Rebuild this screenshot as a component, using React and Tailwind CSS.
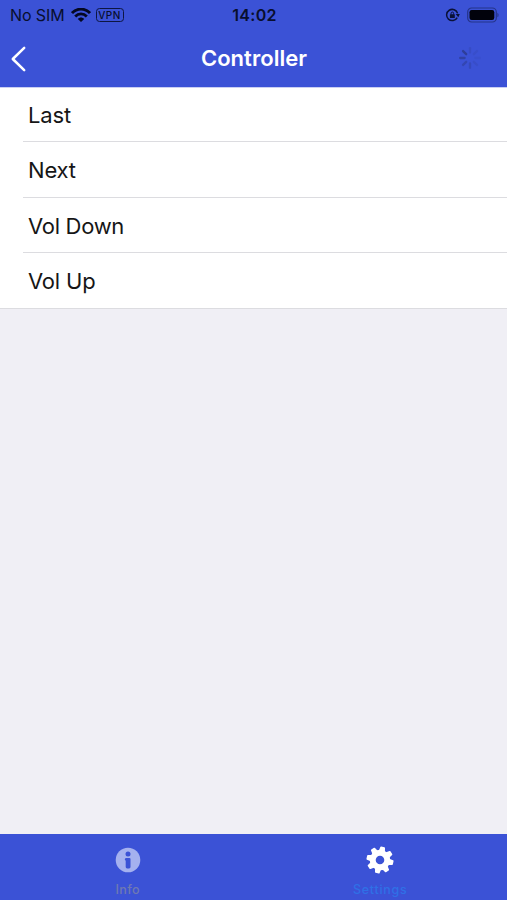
import React from "react";

const rows = [
  { label: "Last", tracking: "tracking-[-0.15px]", height: "h-[54px] pt-px" },
  { label: "Next", tracking: "tracking-[-0.2px]", height: "h-[56px] pt-[2px]" },
  { label: "Vol Down", tracking: "tracking-[-0.3px]", height: "h-[55px] pt-[2px]" },
  { label: "Vol Up", tracking: "tracking-[-0.2px]", height: "h-[55px] pt-[2px]" },
];

const gearTeeth = [12, 57, 102, 147, 192, 237, 282, 327];
const spokes = [0.16, 0.1, 0.08, 0.12, 0.26, 0.34, 0.48, 0.58];

function Wifi() {
  return (
    <svg className="ml-[6px] h-[14px] w-5" viewBox="0 0 20 14" fill="none" stroke="#040822">
      <path d="M1 5.1C6-.2 14-.2 19 5.1" strokeWidth="2.9" />
      <path d="M4.2 8.5C7.5 5.1 12.5 5.1 15.8 8.5" strokeWidth="2.8" />
      <path d="M6.8 11C8.7 9 11.3 9 13.2 11L10 14Z" fill="#040822" stroke="none" />
    </svg>
  );
}

function RotationLock() {
  return (
    <svg className="h-[14px] w-[15px]" viewBox="0 0 15 14" fill="none" stroke="#0a1138">
      <path d="M12.2 9.6A5.6 5.6 0 1 1 12.6 5.4" strokeWidth="1.5" />
      <path d="M10.6 6.1h4.2l-1.5 3.2z" fill="#0a1138" stroke="none" />
      <rect x="4.9" y="6.2" width="4.9" height="3.9" rx=".5" fill="#0a1138" stroke="none" />
      <path d="M6.1 6.6V5.3a1.25 1.25 0 0 1 2.5 0v1.3" strokeWidth="1" />
    </svg>
  );
}

function Battery() {
  return (
    <svg className="-mt-px ml-[7px] h-4 w-8" viewBox="0 0 32 16" fill="none">
      <rect x=".7" y="1" width="28.6" height="14" rx="4" stroke="#253489" strokeWidth="1.2" />
      <rect x="2.5" y="3" width="24.8" height="10" rx="2.2" fill="#01020c" />
      <path d="M30.4 5.7v4.6q1.2-.7 1.2-2.3t-1.2-2.3" fill="#253489" />
    </svg>
  );
}

function Spinner() {
  return (
    <svg className="-mt-px h-6 w-6" viewBox="-12 -12 24 24" stroke="#25306f" strokeWidth="2.3" strokeLinecap="round">
      {spokes.map((opacity, i) => (
        <path key={i} d="M0-5.4V-9.8" opacity={opacity} transform={`rotate(${i * 45})`} />
      ))}
    </svg>
  );
}

function InfoIcon() {
  return (
    <svg className="h-[26px] w-[26px]" viewBox="0 0 26 26">
      <circle cx="13" cy="13" r="12.3" fill="#a5b1ef" />
      <g fill="#3b52d6">
        <circle cx="13" cy="6.9" r="2.5" />
        <path d="M11 10.9h3.4q1.1 0 1.1 1.1v8q0 1.4-1.4 1.4h-2q-1.4 0-1.4-1.4v-6.4q-.9-.2-.9-1.3t1.2-1.4Z" />
      </g>
    </svg>
  );
}

function Gear() {
  return (
    <svg className="h-7 w-7" viewBox="-14 -14 28 28">
      <g fill="#fff" stroke="#fff" strokeLinejoin="round" strokeWidth="1.6">
        {gearTeeth.map((angle) => (
          <path key={angle} d="M-2.4-8.5L-1.6-12.7H1.6L2.4-8.5Z" transform={`rotate(${angle})`} />
        ))}
      </g>
      <circle r="7.3" fill="none" stroke="#fff" strokeWidth="6" />
    </svg>
  );
}

export default function App() {
  return (
    <div className="flex h-[900px] w-[507px] flex-col overflow-hidden bg-[#f0eff5] font-['Inter','Liberation_Sans',sans-serif]">
      <header className="h-[88px] shrink-0 border-b border-[#c9cff3] bg-[#3b52d6]">
        <div className="grid h-[30px] grid-cols-3 items-center text-[#080e2e]">
          <div className="flex items-center pl-[10px]">
            <span className="whitespace-nowrap text-[16px] leading-[30px] tracking-[-0.1px]">No SIM</span>
            <Wifi />
            <span className="-mt-px ml-[5px] flex h-[14px] w-7 shrink-0 items-center justify-center rounded-[3.5px] border-[1.5px] border-[#0d1642] text-[10px] font-medium leading-none tracking-[0.5px]">
              VPN
            </span>
          </div>
          <span className="pl-[2px] text-center text-[16px] font-semibold leading-[30px] tracking-[0.3px]">14:02</span>
          <div className="flex items-center justify-end pr-[8px]">
            <RotationLock />
            <Battery />
          </div>
        </div>
        <div className="grid h-[57px] grid-cols-3 items-center">
          <svg className="ml-[10px] mt-px h-7 w-[18px]" viewBox="0 0 18 28" fill="none" stroke="#fff" strokeWidth="2.5" strokeLinecap="round" strokeLinejoin="round">
            <path d="M14.2 2.8L2.8 14L14.2 25.2" />
          </svg>
          <h1 className="-mt-px pl-px text-center text-[22px] font-semibold leading-[56px] tracking-[0.05px] text-white">Controller</h1>
          <div className="flex justify-end pr-[25px]">
            <Spinner />
          </div>
        </div>
      </header>

      <ul className="shrink-0 border-b border-[#dcdce0] bg-white">
        {rows.map((row, i) => (
          <li
            key={row.label}
            className={`ml-[23px] flex items-center pl-[5px] text-[22px] text-[#161616] ${row.tracking} ${row.height} ${i < rows.length - 1 ? "border-b border-[#dcdce0]" : ""}`}
          >
            {row.label}
          </li>
        ))}
      </ul>

      <nav className="mt-auto grid h-[66px] shrink-0 grid-cols-2 bg-[#3b52d6] text-[12.5px] font-medium leading-4">
        <div className="flex flex-col items-center pt-[13px] pl-[2px]">
          <InfoIcon />
          <span className="mt-[9px] tracking-[0.4px] text-[#6f79b2]">Info</span>
        </div>
        <div className="flex flex-col items-center pt-3">
          <Gear />
          <span className="mt-2 tracking-[0.75px] text-[#2f70e6]">Settings</span>
        </div>
      </nav>
    </div>
  );
}
